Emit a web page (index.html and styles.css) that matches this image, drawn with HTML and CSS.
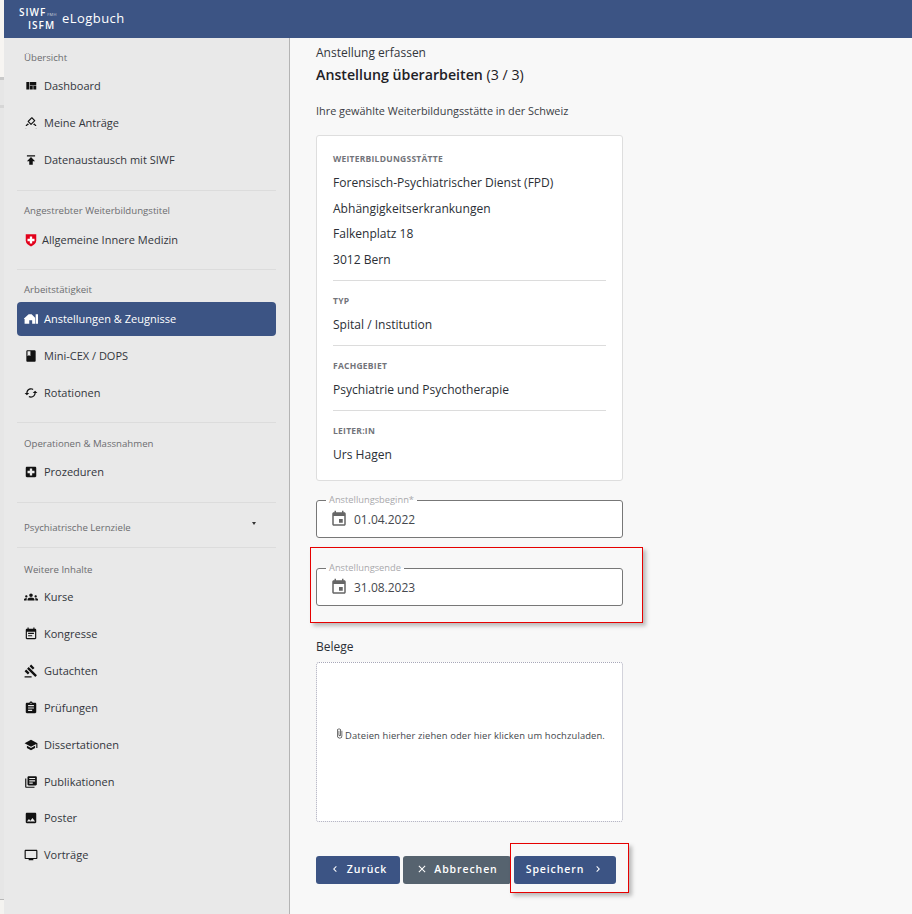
FILE: index.html
```html
<!DOCTYPE html>
<html lang="de">
<head>
<meta charset="utf-8">
<title>eLogbuch</title>
<link rel="stylesheet" href="styles.css">
</head>
<body>
<div class="page">
  <div class="strip">
    <div class="strip-a"></div>
    <div class="strip-b"></div>
    <div class="strip-c"></div>
    <div class="strip-d"></div>
  </div>
  <div class="app">
    <header class="topbar">
      <div class="logo">
        <div class="logo-mark">
          <span class="logo-line">SIWF<small class="logo-fmh">FMH</small></span>
          <span class="logo-line logo-second">ISFM</span>
        </div>
        <span class="logo-name">eLogbuch</span>
      </div>
    </header>
    <div class="body">
      <nav class="sidebar">
        <section class="group group-first">
          <h2 class="group-label">Übersicht</h2>
          <a class="item"><svg class="icon" viewBox="0 0 24 24"><path d="M10 18h5v-6h-5v6zm-6 0h5V5H4v13zm12 0h5v-6h-5v6zM10 5v6h11V5H10z"/></svg><span>Dashboard</span></a>
          <a class="item"><svg class="icon" viewBox="0 0 24 24"><path d="M18 13h-.68l-2 2h1.91L19 17H5l1.78-2h2.05l-2-2H6l-3 3v4c0 1.1.89 2 1.99 2H19c1.1 0 2-.89 2-2v-4l-3-3zm-1-5.05l-4.95 4.95-3.54-3.54 4.95-4.95L17 7.95zm-4.24-5.66L6.39 8.66c-.39.39-.39 1.02 0 1.41l4.95 4.95c.39.39 1.02.39 1.41 0l6.36-6.36c.39-.39.39-1.02 0-1.41L14.16 2.3c-.38-.4-1.01-.4-1.4-.01zM3 17h18v5H3z"/></svg><span>Meine Anträge</span></a>
          <a class="item"><svg class="icon" viewBox="0 0 24 24"><path d="M5 4v2h14V4H5zm0 10h4v6h6v-6h4l-7-7-7 7z"/></svg><span>Datenaustausch mit SIWF</span></a>
        </section>
        <section class="group">
          <h2 class="group-label">Angestrebter Weiterbildungstitel</h2>
          <a class="item item-flag"><svg class="icon" viewBox="0 0 24 24"><path class="flag-red" d="M3 2h18v11c0 5-4 8-9 10-5-2-9-5-9-10z"/><path class="flag-white" d="M10 6h4v4h4v4h-4v4h-4v-4H6v-4h4z"/></svg><span>Allgemeine Innere Medizin</span></a>
        </section>
        <section class="group">
          <h2 class="group-label">Arbeitstätigkeit</h2>
          <a class="item item-active"><svg class="icon" viewBox="0 0 24 24"><path d="M0 11 8 4h5l6 6v10h-5v-6H9v6H1v-8H0zM20 4h4v16h-4z"/></svg><span>Anstellungen &amp; Zeugnisse</span></a>
          <a class="item"><svg class="icon" viewBox="0 0 24 24"><path d="M18 2H6c-1.1 0-2 .9-2 2v16c0 1.1.9 2 2 2h12c1.1 0 2-.9 2-2V4c0-1.1-.9-2-2-2zM6 4h5v8l-2.5-1.5L6 12V4z"/></svg><span>Mini-CEX / DOPS</span></a>
          <a class="item"><svg class="icon" viewBox="0 0 24 24"><path d="M19 8l-4 4h3c0 3.31-2.69 6-6 6-1.01 0-1.97-.25-2.8-.7l-1.46 1.46C8.97 19.54 10.43 20 12 20c4.42 0 8-3.58 8-8h3l-4-4zM6 12c0-3.31 2.69-6 6-6 1.01 0 1.97.25 2.8.7l1.46-1.46C15.03 4.46 13.57 4 12 4c-4.42 0-8 3.58-8 8H1l4 4 4-4H6z"/></svg><span>Rotationen</span></a>
        </section>
        <section class="group group-ops">
          <h2 class="group-label">Operationen &amp; Massnahmen</h2>
          <a class="item"><svg class="icon" viewBox="0 0 24 24"><path d="M19 3H5c-1.1 0-1.99.9-1.99 2L3 19c0 1.1.9 2 2 2h14c1.1 0 2-.9 2-2V5c0-1.1-.9-2-2-2zm-1 11h-4v4h-4v-4H6v-4h4V6h4v4h4v4z"/></svg><span>Prozeduren</span></a>
        </section>
        <section class="group group-fold">
          <h2 class="group-label">Psychiatrische Lernziele</h2>
          <span class="caret"></span>
        </section>
        <section class="group group-last">
          <h2 class="group-label">Weitere Inhalte</h2>
          <a class="item"><svg class="icon" viewBox="0 0 24 24"><path d="M12 12.75c1.63 0 3.07.39 4.24.9 1.08.48 1.76 1.56 1.76 2.73V18H6v-1.61c0-1.18.68-2.26 1.76-2.73 1.17-.52 2.61-.91 4.24-.91zM4 13c1.1 0 2-.9 2-2s-.9-2-2-2-2 .9-2 2 .9 2 2 2zm1.13 1.1c-.37-.06-.74-.1-1.13-.1-.99 0-1.93.21-2.78.58C.48 14.9 0 15.62 0 16.43V18h4.5v-1.61c0-.83.23-1.61.63-2.29zM20 13c1.1 0 2-.9 2-2s-.9-2-2-2-2 .9-2 2 .9 2 2 2zm4 3.43c0-.81-.48-1.53-1.22-1.85-.85-.37-1.79-.58-2.78-.58-.39 0-.76.04-1.13.1.4.68.63 1.46.63 2.29V18H24v-1.57zM12 6c1.66 0 3 1.34 3 3s-1.34 3-3 3-3-1.34-3-3 1.34-3 3-3z"/></svg><span>Kurse</span></a>
          <a class="item"><svg class="icon" viewBox="0 0 24 24"><path d="M17 10H7v2h10v-2zm2-7h-1V1h-2v2H8V1H6v2H5c-1.11 0-1.99.9-1.99 2L3 19c0 1.1.89 2 2 2h14c1.1 0 2-.9 2-2V5c0-1.1-.9-2-2-2zm0 16H5V8h14v11zm-5-5H7v2h7v-2z"/></svg><span>Kongresse</span></a>
          <a class="item"><svg class="icon" viewBox="0 0 24 24"><path d="M1 21h12v2H1zM5.245 8.07l2.83-2.827 14.14 14.142-2.828 2.828zM12.317 1l5.657 5.656-2.83 2.83-5.654-5.66zM3.825 9.485l5.657 5.657-2.828 2.828-5.657-5.657z"/></svg><span>Gutachten</span></a>
          <a class="item"><svg class="icon" viewBox="0 0 24 24"><path d="M19 3h-4.18C14.4 1.84 13.3 1 12 1c-1.3 0-2.4.84-2.82 2H5c-1.1 0-2 .9-2 2v14c0 1.1.9 2 2 2h14c1.1 0 2-.9 2-2V5c0-1.1-.9-2-2-2zm-7 0c.55 0 1 .45 1 1s-.45 1-1 1-1-.45-1-1 .45-1 1-1zm2 14H7v-2h7v2zm3-4H7v-2h10v2zm0-4H7V7h10v2z"/></svg><span>Prüfungen</span></a>
          <a class="item"><svg class="icon" viewBox="0 0 24 24"><path d="M5 13.18v4L12 21l7-3.82v-4L12 17l-7-3.82zM12 3L1 9l11 6 9-4.91V17h2V9L12 3z"/></svg><span>Dissertationen</span></a>
          <a class="item item-tight"><svg class="icon" viewBox="0 0 24 24"><path d="M4 6H2v14c0 1.1.9 2 2 2h14v-2H4V6zm16-4H8c-1.1 0-2 .9-2 2v12c0 1.1.9 2 2 2h12c1.1 0 2-.9 2-2V4c0-1.1-.9-2-2-2zm-1 9H9V9h10v2zm-4 4H9v-2h6v2zm4-8H9V5h10v2z"/></svg><span>Publikationen</span></a>
          <a class="item"><svg class="icon" viewBox="0 0 24 24"><path d="M21 19V5c0-1.1-.9-2-2-2H5c-1.1 0-2 .9-2 2v14c0 1.1.9 2 2 2h14c1.1 0 2-.9 2-2zM8.5 13.5l2.5 3.01L14.5 12l4.5 6H5l3.5-4.5z"/></svg><span>Poster</span></a>
          <a class="item"><svg class="icon" viewBox="0 0 24 24"><path d="M21 3H3c-1.1 0-2 .9-2 2v12c0 1.1.9 2 2 2h5v2h8v-2h5c1.1 0 1.99-.9 1.99-2L23 5c0-1.1-.9-2-2-2zm0 14H3V5h18v12z"/></svg><span>Vorträge</span></a>
        </section>
      </nav>
      <main class="main">
        <div class="column">
          <p class="crumb">Anstellung erfassen</p>
          <h1 class="title">Anstellung überarbeiten <span class="title-step">(3 / 3)</span></h1>
          <p class="intro">Ihre gewählte Weiterbildungsstätte in der Schweiz</p>
          <div class="card">
            <div class="card-block">
              <h3 class="card-label">Weiterbildungsstätte</h3>
              <p class="card-line">Forensisch-Psychiatrischer Dienst (FPD)</p>
              <p class="card-line">Abhängigkeitserkrankungen</p>
              <p class="card-line">Falkenplatz 18</p>
              <p class="card-line">3012 Bern</p>
            </div>
            <div class="card-block">
              <h3 class="card-label">Typ</h3>
              <p class="card-line">Spital / Institution</p>
            </div>
            <div class="card-block card-block-third">
              <h3 class="card-label">Fachgebiet</h3>
              <p class="card-line">Psychiatrie und Psychotherapie</p>
            </div>
            <div class="card-block">
              <h3 class="card-label">Leiter:in</h3>
              <p class="card-line">Urs Hagen</p>
            </div>
          </div>
          <fieldset class="field">
            <legend class="field-label">Anstellungsbeginn*</legend>
            <svg class="field-icon" viewBox="0 0 24 24"><path d="M17 12h-5v5h5v-5zM16 1v2H8V1H6v2H5c-1.11 0-1.99.9-1.99 2L3 19c0 1.1.89 2 2 2h14c1.1 0 2-.9 2-2V5c0-1.1-.9-2-2-2h-1V1h-2zm3 18H5V8h14v11z"/></svg>
            <span class="field-value">01.04.2022</span>
          </fieldset>
          <fieldset class="field field-end marked-field">
            <legend class="field-label">Anstellungsende</legend>
            <svg class="field-icon" viewBox="0 0 24 24"><path d="M17 12h-5v5h5v-5zM16 1v2H8V1H6v2H5c-1.11 0-1.99.9-1.99 2L3 19c0 1.1.89 2 2 2h14c1.1 0 2-.9 2-2V5c0-1.1-.9-2-2-2h-1V1h-2zm3 18H5V8h14v11z"/></svg>
            <span class="field-value">31.08.2023</span>
          </fieldset>
          <p class="belege">Belege</p>
          <div class="dropzone">
            <svg class="clip" viewBox="0 0 24 24"><path d="M16.5 6v11.5c0 2.21-1.79 4-4 4s-4-1.79-4-4V5c0-1.38 1.12-2.5 2.5-2.5s2.5 1.12 2.5 2.5v10.5c0 .55-.45 1-1 1s-1-.45-1-1V6H10v9.5c0 1.38 1.12 2.5 2.5 2.5s2.5-1.12 2.5-2.5V5c0-2.21-1.79-4-4-4S7 2.79 7 5v12.5c0 3.04 2.46 5.5 5.5 5.5s5.5-2.46 5.5-5.5V6h-1.5z"/></svg>
            <span>Dateien hierher ziehen oder hier klicken um hochzuladen.</span>
          </div>
          <div class="actions">
            <button class="btn btn-back"><svg class="btn-icon" viewBox="0 0 24 24"><path d="M15.41 7.41L14 6l-6 6 6 6 1.41-1.41L10.83 12z"/></svg>Zurück</button>
            <button class="btn btn-cancel"><svg class="btn-icon" viewBox="0 0 24 24"><path d="M19 6.41L17.59 5 12 10.59 6.41 5 5 6.41 10.59 12 5 17.59 6.41 19 12 13.41 17.59 19 19 17.59 13.41 12z"/></svg>Abbrechen</button>
            <button class="btn btn-save marked-btn">Speichern<svg class="btn-icon" viewBox="0 0 24 24"><path d="M10 6L8.59 7.41 13.17 12l-4.58 4.59L10 18l6-6z"/></svg></button>
          </div>
        </div>
      </main>
    </div>
  </div>
</div>
</body>
</html>
```

FILE: styles.css
```css
* { box-sizing: border-box; }
html, body { margin: 0; height: 100%; overflow: hidden; }
body { font-family: "Open Sans", "Noto Sans", sans-serif; font-size: 12px; color: #2b2f36; }
h1, h2, h3, p { margin: 0; font-weight: 400; }

.page { display: flex; height: 914px; }

.strip { width: 4px; flex: none; display: flex; flex-direction: column; }
.strip-a { height: 77px; background: #f7f5f2; border-bottom: 3px solid #c9c9c9; box-sizing: content-box; }
.strip-b { height: 25px; background: #e6e6e6; border-bottom: 3px solid #d6d6d6; box-sizing: content-box; }
.strip-c { height: 791px; background: #e6e6e6; border-bottom: 1px solid #b8b8b8; box-sizing: content-box; }
.strip-d { flex: 1; background: #f4f3f0; }

.app { flex: 1; display: flex; flex-direction: column; min-width: 0; }

.topbar { height: 38px; flex: none; background: #3c5484; display: flex; align-items: center; padding: 0 0 3px 15px; color: #fff; }
.logo { display: flex; align-items: center; }
.logo-mark { display: flex; flex-direction: column; font-size: 10px; font-weight: 600; line-height: 10px; letter-spacing: 1px; width: 43px; padding-top: 1px; }
.logo-line { white-space: nowrap; }
.logo-second { padding-left: 9px; }
.logo-fmh { font-size: 4px; font-weight: 400; letter-spacing: .2px; margin-left: 1px; opacity: .7; }
.logo-name { font-size: 13px; letter-spacing: .45px; }

.body { flex: 1; display: flex; min-height: 0; }

.sidebar { width: 286px; flex: none; background: #e9e9e9; border-right: 1px solid #b4b4b4; padding: 0 13px; }
.group { border-bottom: 1px solid #dcdcdc; padding: 13px 0 9px; }
.group-first { padding-bottom: 10px; }
.group-ops { padding: 14px 0 10px; }
.group-fold { position: relative; padding: 18px 0 12px; }
.group-last { border-bottom: 0; padding-top: 15px; }
.group-label { font-size: 9.65px; line-height: 14px; color: #6c6c70; padding-left: 7px; margin-bottom: 5px; }
.group-first .group-label, .group-ops .group-label { margin-bottom: 4px; }
.group-last .group-label { margin-bottom: 3px; }
.group-fold .group-label { margin: 0; }
.caret { position: absolute; right: 20px; top: 19px; border: 2.5px solid transparent; border-top: 3px solid #333; border-bottom: 0; }

.item { display: flex; align-items: center; height: 34px; margin-bottom: 3px; padding: 0 0 2px 7px; gap: 6px; font-size: 11px; color: #33363c; border-radius: 4px; }
.item-tight { margin-bottom: 2px; }
.icon { width: 14px; height: 14px; flex: none; fill: #111; margin-top: 2px; }
.item-flag { gap: 4px; }
.flag-red { fill: #e2001a; }
.flag-white { fill: #fff; }
.item-active { background: #3c5484; color: #fff; font-weight: 500; }
.item-active .icon { fill: #fff; }

.main { flex: 1; background: #f8f8f8; padding: 6px 0 0 26px; min-width: 0; }
.column { width: 307px; }
.crumb { font-size: 12px; line-height: 17px; color: #33363c; }
.title { font-size: 14.2px; font-weight: 600; line-height: 20px; margin-top: 4px; color: #1e2126; }
.title-step { font-weight: 500; }
.intro { font-size: 10.87px; line-height: 16px; margin-top: 18px; color: #3a3d44; }

.card { margin-top: 16px; height: 346px; background: #fff; border: 1px solid #dedede; border-radius: 3px; padding: 16px 16px 0; }
.card-block { border-bottom: 1px solid #dcdcdc; padding-bottom: 8px; margin-bottom: 12.3px; }
.card-block-third { margin-bottom: 13.2px; }
.card-block:last-child { border-bottom: 0; margin: 0; }
.card-label { font-size: 8.5px; line-height: 14px; font-weight: 700; letter-spacing: .25px; text-transform: uppercase; color: #72747a; margin-bottom: 4px; }
.card-line { font-size: 12.05px; line-height: 25.6px; color: #2b2f36; }

.field { position: relative; margin: 14px 0 0; padding: 0 0 0 13px; height: 43px; border: 1px solid #777; border-radius: 3px; background: #fff; display: flex; align-items: center; gap: 6px; }
.field-label { font-size: 9.3px; line-height: 10px; color: #a9a9ac; margin-left: -4px; padding: 0 3px; }
.field-icon { width: 18px; height: 18px; fill: #666; flex: none; margin-top: -4px; }
.field-value { font-size: 12px; color: #45484e; margin-top: -4px; }
.field-end { margin-top: 25px; }
.marked-field::after { content: ""; position: absolute; left: -7px; top: -26px; width: 331px; height: 74px; border: 1px solid #e60000; box-shadow: 3px 3px 4px rgba(0,0,0,.25); pointer-events: none; }

.belege { font-size: 12px; line-height: 17px; margin-top: 32px; color: #2b2f36; }
.dropzone { margin-top: 7px; height: 160px; background: #fff; border: 1px dotted #a7a7b8; border-radius: 3px; display: flex; align-items: center; justify-content: center; font-size: 9.4px; letter-spacing: .13px; color: #44474d; padding-bottom: 13px; }
.clip { width: 11px; height: 15px; margin-top: -4px; fill: #333; }

.actions { display: flex; gap: 3px; margin-top: 34px; }
.btn { height: 28px; border: 0; border-radius: 3px; background: #3c5484; color: #fff; font: 600 10.5px "Open Sans", sans-serif; letter-spacing: .9px; display: flex; align-items: center; justify-content: center; padding: 0 0 2px; position: relative; }
.btn-icon { width: 12px; height: 12px; fill: #fff; }
.btn-back { width: 84px; gap: 6px; }
.btn-cancel { width: 108px; gap: 6px; background: #56636f; }
.btn-save { width: 102px; gap: 8px; }
.marked-btn::after { content: ""; position: absolute; left: -4px; top: -13px; width: 117px; height: 48px; border: 1px solid #e60000; box-shadow: 3px 3px 4px rgba(0,0,0,.25); pointer-events: none; }
```
